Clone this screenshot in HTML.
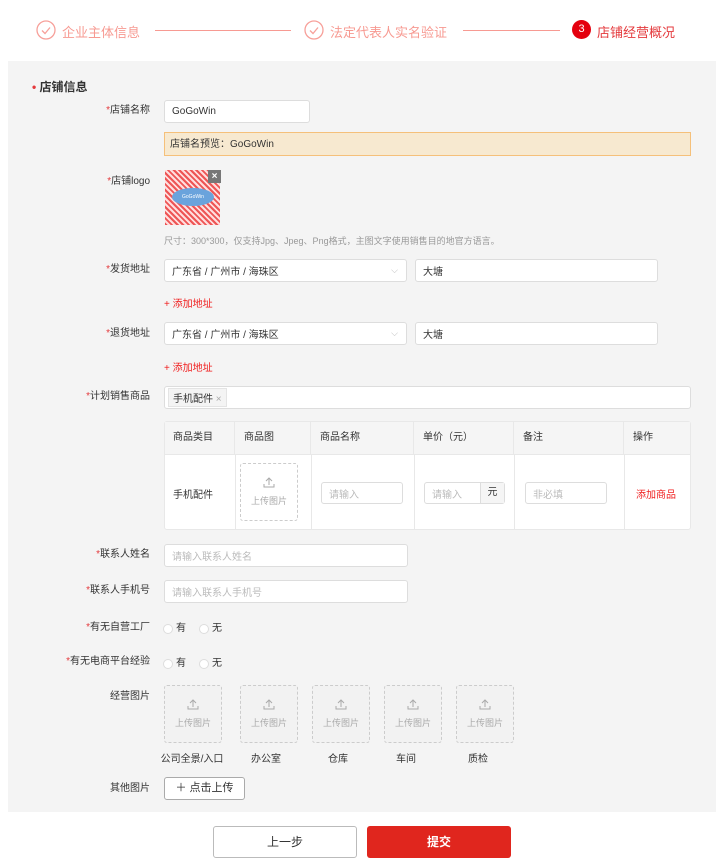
<!DOCTYPE html>
<html><head><meta charset="utf-8"><style>
*{box-sizing:border-box;margin:0;padding:0}
body{width:720px;height:867px;background:#fff;font-family:"Liberation Sans","Noto Sans CJK SC",sans-serif;position:relative;overflow:hidden;color:#333}
.a{position:absolute}
.gray{left:8px;top:61px;width:708px;height:751px;background:#f4f4f4}
.lbl{position:absolute;right:570px;font-size:10px;color:#333;white-space:nowrap;line-height:12px}
.lbl b{color:#e4393c;font-weight:normal}
.inp{position:absolute;background:#fff;border:1px solid #ddd;border-radius:3px;font-size:10px;padding-left:7px;display:flex;align-items:center;color:#333}
.ph{color:#bbb}
.red{color:#f01e1e}
.up{position:absolute;width:58px;height:58px;border:1px dashed #ccc;border-radius:3px;background:#f2f2f2;font-size:9px;color:#aaa;text-align:center}
.up svg{display:block;margin:12px auto 6px}
.cap{position:absolute;font-size:10px;top:750px;text-align:center;width:80px}
.th{position:absolute;top:421px;height:34px;font-size:10px;line-height:34px;padding-left:9px;border-right:1px solid #e8e8e8}
.radio{position:absolute;width:10px;height:10px;border:1px solid #ddd;border-radius:50%;background:#fff}
.rt{position:absolute;font-size:10px;line-height:12px}
</style></head><body>
<svg class="a" style="left:36px;top:20px" width="20" height="20"><circle cx="10" cy="10" r="9" fill="none" stroke="#f7a09a" stroke-width="1.3"/><path d="M6 10.5l3 3 5-6" fill="none" stroke="#f7a09a" stroke-width="1.3"/></svg>
<div class="a" style="left:62px;top:22px;font-size:13px;color:#f79a92">企业主体信息</div>
<div class="a" style="left:155px;top:30px;width:136px;height:1px;background:#f79a92"></div>
<svg class="a" style="left:304px;top:20px" width="20" height="20"><circle cx="10" cy="10" r="9" fill="none" stroke="#f7a09a" stroke-width="1.3"/><path d="M6 10.5l3 3 5-6" fill="none" stroke="#f7a09a" stroke-width="1.3"/></svg>
<div class="a" style="left:330px;top:22px;font-size:13px;color:#f79a92">法定代表人实名验证</div>
<div class="a" style="left:463px;top:30px;width:97px;height:1px;background:#f79a92"></div>
<div class="a" style="left:572px;top:20px;width:19px;height:19px;border-radius:50%;background:#e4000e;color:#fff;font-size:11px;text-align:center;line-height:19px">3</div>
<div class="a" style="left:597px;top:22px;font-size:13px;color:#e4393c">店铺经营概况</div>

<div class="a gray"></div>
<div class="a" style="left:32px;top:78px;font-size:12px;font-weight:bold;color:#333"><span style="color:#e4393c">•</span>&nbsp;店铺信息</div>

<div class="lbl" style="top:105px"><b>*</b>店铺名称</div>
<div class="inp" style="left:164px;top:100px;width:146px;height:23px">GoGoWin</div>
<div class="a" style="left:164px;top:132px;width:527px;height:24px;background:#f7e9d0;border:1px solid #f5c07a;font-size:10px;line-height:22px;padding-left:5px;padding-top:1px">店铺名预览：GoGoWin</div>

<div class="lbl" style="top:176px"><b>*</b>店铺logo</div>
<div class="a" style="left:165px;top:170px;width:55px;height:55px;background:repeating-linear-gradient(45deg,#e55 0 2px,#fdd 2px 4px)"></div>
<div class="a" style="left:172px;top:188px;width:42px;height:18px;border-radius:50%;background:#6aa3dc;font-size:5px;color:#fff;text-align:center;line-height:18px">GoGoWin</div>
<div class="a" style="left:208px;top:170px;width:13px;height:13px;background:#777;color:#fff;font-size:10px;text-align:center;line-height:13px;font-weight:bold">×</div>
<div class="a" style="left:164px;top:234px;font-size:9px;color:#999">尺寸：300*300，仅支持Jpg、Jpeg、Png格式，主图文字使用销售目的地官方语言。</div>

<div class="lbl" style="top:264px"><b>*</b>发货地址</div>
<div class="inp" style="left:164px;top:259px;width:243px;height:23px">广东省 / 广州市 / 海珠区<span style="position:absolute;right:8px;color:#bbb;font-size:9px">⌵</span></div>
<div class="inp" style="left:415px;top:259px;width:243px;height:23px">大塘</div>
<div class="a red" style="left:164px;top:295px;font-size:10px">+ 添加地址</div>

<div class="lbl" style="top:328px"><b>*</b>退货地址</div>
<div class="inp" style="left:164px;top:322px;width:243px;height:23px">广东省 / 广州市 / 海珠区<span style="position:absolute;right:8px;color:#bbb;font-size:9px">⌵</span></div>
<div class="inp" style="left:415px;top:322px;width:243px;height:23px">大塘</div>
<div class="a red" style="left:164px;top:359px;font-size:10px">+ 添加地址</div>

<div class="lbl" style="top:391px"><b>*</b>计划销售商品</div>
<div class="inp" style="left:164px;top:386px;width:527px;height:23px;padding-left:3px"><span style="background:#f4f4f4;border:1px solid #e4e4e4;padding:1px 4px;font-size:10px">手机配件 <span style="color:#aaa">×</span></span></div>

<div class="a" style="left:164px;top:421px;width:527px;height:109px;background:#fff;border:1px solid #e8e8e8;border-radius:3px"></div>
<div class="a" style="left:165px;top:422px;width:525px;height:33px;background:#f5f5f5;border-bottom:1px solid #e8e8e8"></div>
<div class="th" style="left:164px;width:71px">商品类目</div>
<div class="th" style="left:235px;width:76px">商品图</div>
<div class="th" style="left:311px;width:103px">商品名称</div>
<div class="th" style="left:414px;width:100px">单价（元）</div>
<div class="th" style="left:514px;width:110px">备注</div>
<div class="th" style="left:624px;width:67px;border:none">操作</div>
<div class="a" style="left:235px;top:455px;width:1px;height:74px;background:#e8e8e8"></div>
<div class="a" style="left:311px;top:455px;width:1px;height:74px;background:#e8e8e8"></div>
<div class="a" style="left:414px;top:455px;width:1px;height:74px;background:#e8e8e8"></div>
<div class="a" style="left:514px;top:455px;width:1px;height:74px;background:#e8e8e8"></div>
<div class="a" style="left:624px;top:455px;width:1px;height:74px;background:#e8e8e8"></div>
<div class="a" style="left:173px;top:486px;font-size:10px">手机配件</div>
<div class="up" style="left:240px;top:463px;background:#fff"><svg width="12" height="12" viewBox="0 0 12 12"><path d="M6 9V2M3 5l3-3 3 3M1 8v3h10V8" fill="none" stroke="#aaa"/></svg>上传图片</div>
<div class="inp ph" style="left:321px;top:482px;width:82px;height:22px">请输入</div>
<div class="inp ph" style="left:424px;top:482px;width:81px;height:22px">请输入<span style="position:absolute;right:0;top:0;height:20px;width:24px;border-left:1px solid #ddd;background:#f5f5f5;color:#333;text-align:center;line-height:20px">元</span></div>
<div class="inp ph" style="left:525px;top:482px;width:82px;height:22px">非必填</div>
<div class="a red" style="left:636px;top:486px;font-size:10px">添加商品</div>

<div class="lbl" style="top:549px"><b>*</b>联系人姓名</div>
<div class="inp ph" style="left:164px;top:544px;width:244px;height:23px">请输入联系人姓名</div>
<div class="lbl" style="top:585px"><b>*</b>联系人手机号</div>
<div class="inp ph" style="left:164px;top:580px;width:244px;height:23px">请输入联系人手机号</div>

<div class="lbl" style="top:622px"><b>*</b>有无自营工厂</div>
<div class="radio" style="left:163px;top:624px"></div><div class="rt" style="left:176px;top:623px">有</div>
<div class="radio" style="left:199px;top:624px"></div><div class="rt" style="left:212px;top:623px">无</div>
<div class="lbl" style="top:656px"><b>*</b>有无电商平台经验</div>
<div class="radio" style="left:163px;top:659px"></div><div class="rt" style="left:176px;top:658px">有</div>
<div class="radio" style="left:199px;top:659px"></div><div class="rt" style="left:212px;top:658px">无</div>

<div class="lbl" style="top:691px">经营图片</div>
<div class="up" style="left:164px;top:685px"><svg width="12" height="12" viewBox="0 0 12 12"><path d="M6 9V2M3 5l3-3 3 3M1 8v3h10V8" fill="none" stroke="#aaa"/></svg>上传图片</div>
<div class="up" style="left:240px;top:685px"><svg width="12" height="12" viewBox="0 0 12 12"><path d="M6 9V2M3 5l3-3 3 3M1 8v3h10V8" fill="none" stroke="#aaa"/></svg>上传图片</div>
<div class="up" style="left:312px;top:685px"><svg width="12" height="12" viewBox="0 0 12 12"><path d="M6 9V2M3 5l3-3 3 3M1 8v3h10V8" fill="none" stroke="#aaa"/></svg>上传图片</div>
<div class="up" style="left:384px;top:685px"><svg width="12" height="12" viewBox="0 0 12 12"><path d="M6 9V2M3 5l3-3 3 3M1 8v3h10V8" fill="none" stroke="#aaa"/></svg>上传图片</div>
<div class="up" style="left:456px;top:685px"><svg width="12" height="12" viewBox="0 0 12 12"><path d="M6 9V2M3 5l3-3 3 3M1 8v3h10V8" fill="none" stroke="#aaa"/></svg>上传图片</div>
<div class="cap" style="left:152px">公司全景/入口</div>
<div class="cap" style="left:226px">办公室</div>
<div class="cap" style="left:298px">仓库</div>
<div class="cap" style="left:366px">车间</div>
<div class="cap" style="left:438px">质检</div>

<div class="lbl" style="top:783px">其他图片</div>
<div class="a" style="left:164px;top:777px;width:81px;height:23px;border:1px solid #aaa;border-radius:3px;background:#fff;font-size:11px;text-align:center;line-height:21px">＋ 点击上传</div>

<div class="a" style="left:213px;top:826px;width:144px;height:32px;border:1px solid #bbb;border-radius:3px;background:#fff;font-size:12px;text-align:center;line-height:30px">上一步</div>
<div class="a" style="left:367px;top:826px;width:144px;height:32px;border-radius:3px;background:#e0261e;color:#fff;font-size:12px;text-align:center;line-height:32px;font-weight:bold">提交</div>
</body></html>
